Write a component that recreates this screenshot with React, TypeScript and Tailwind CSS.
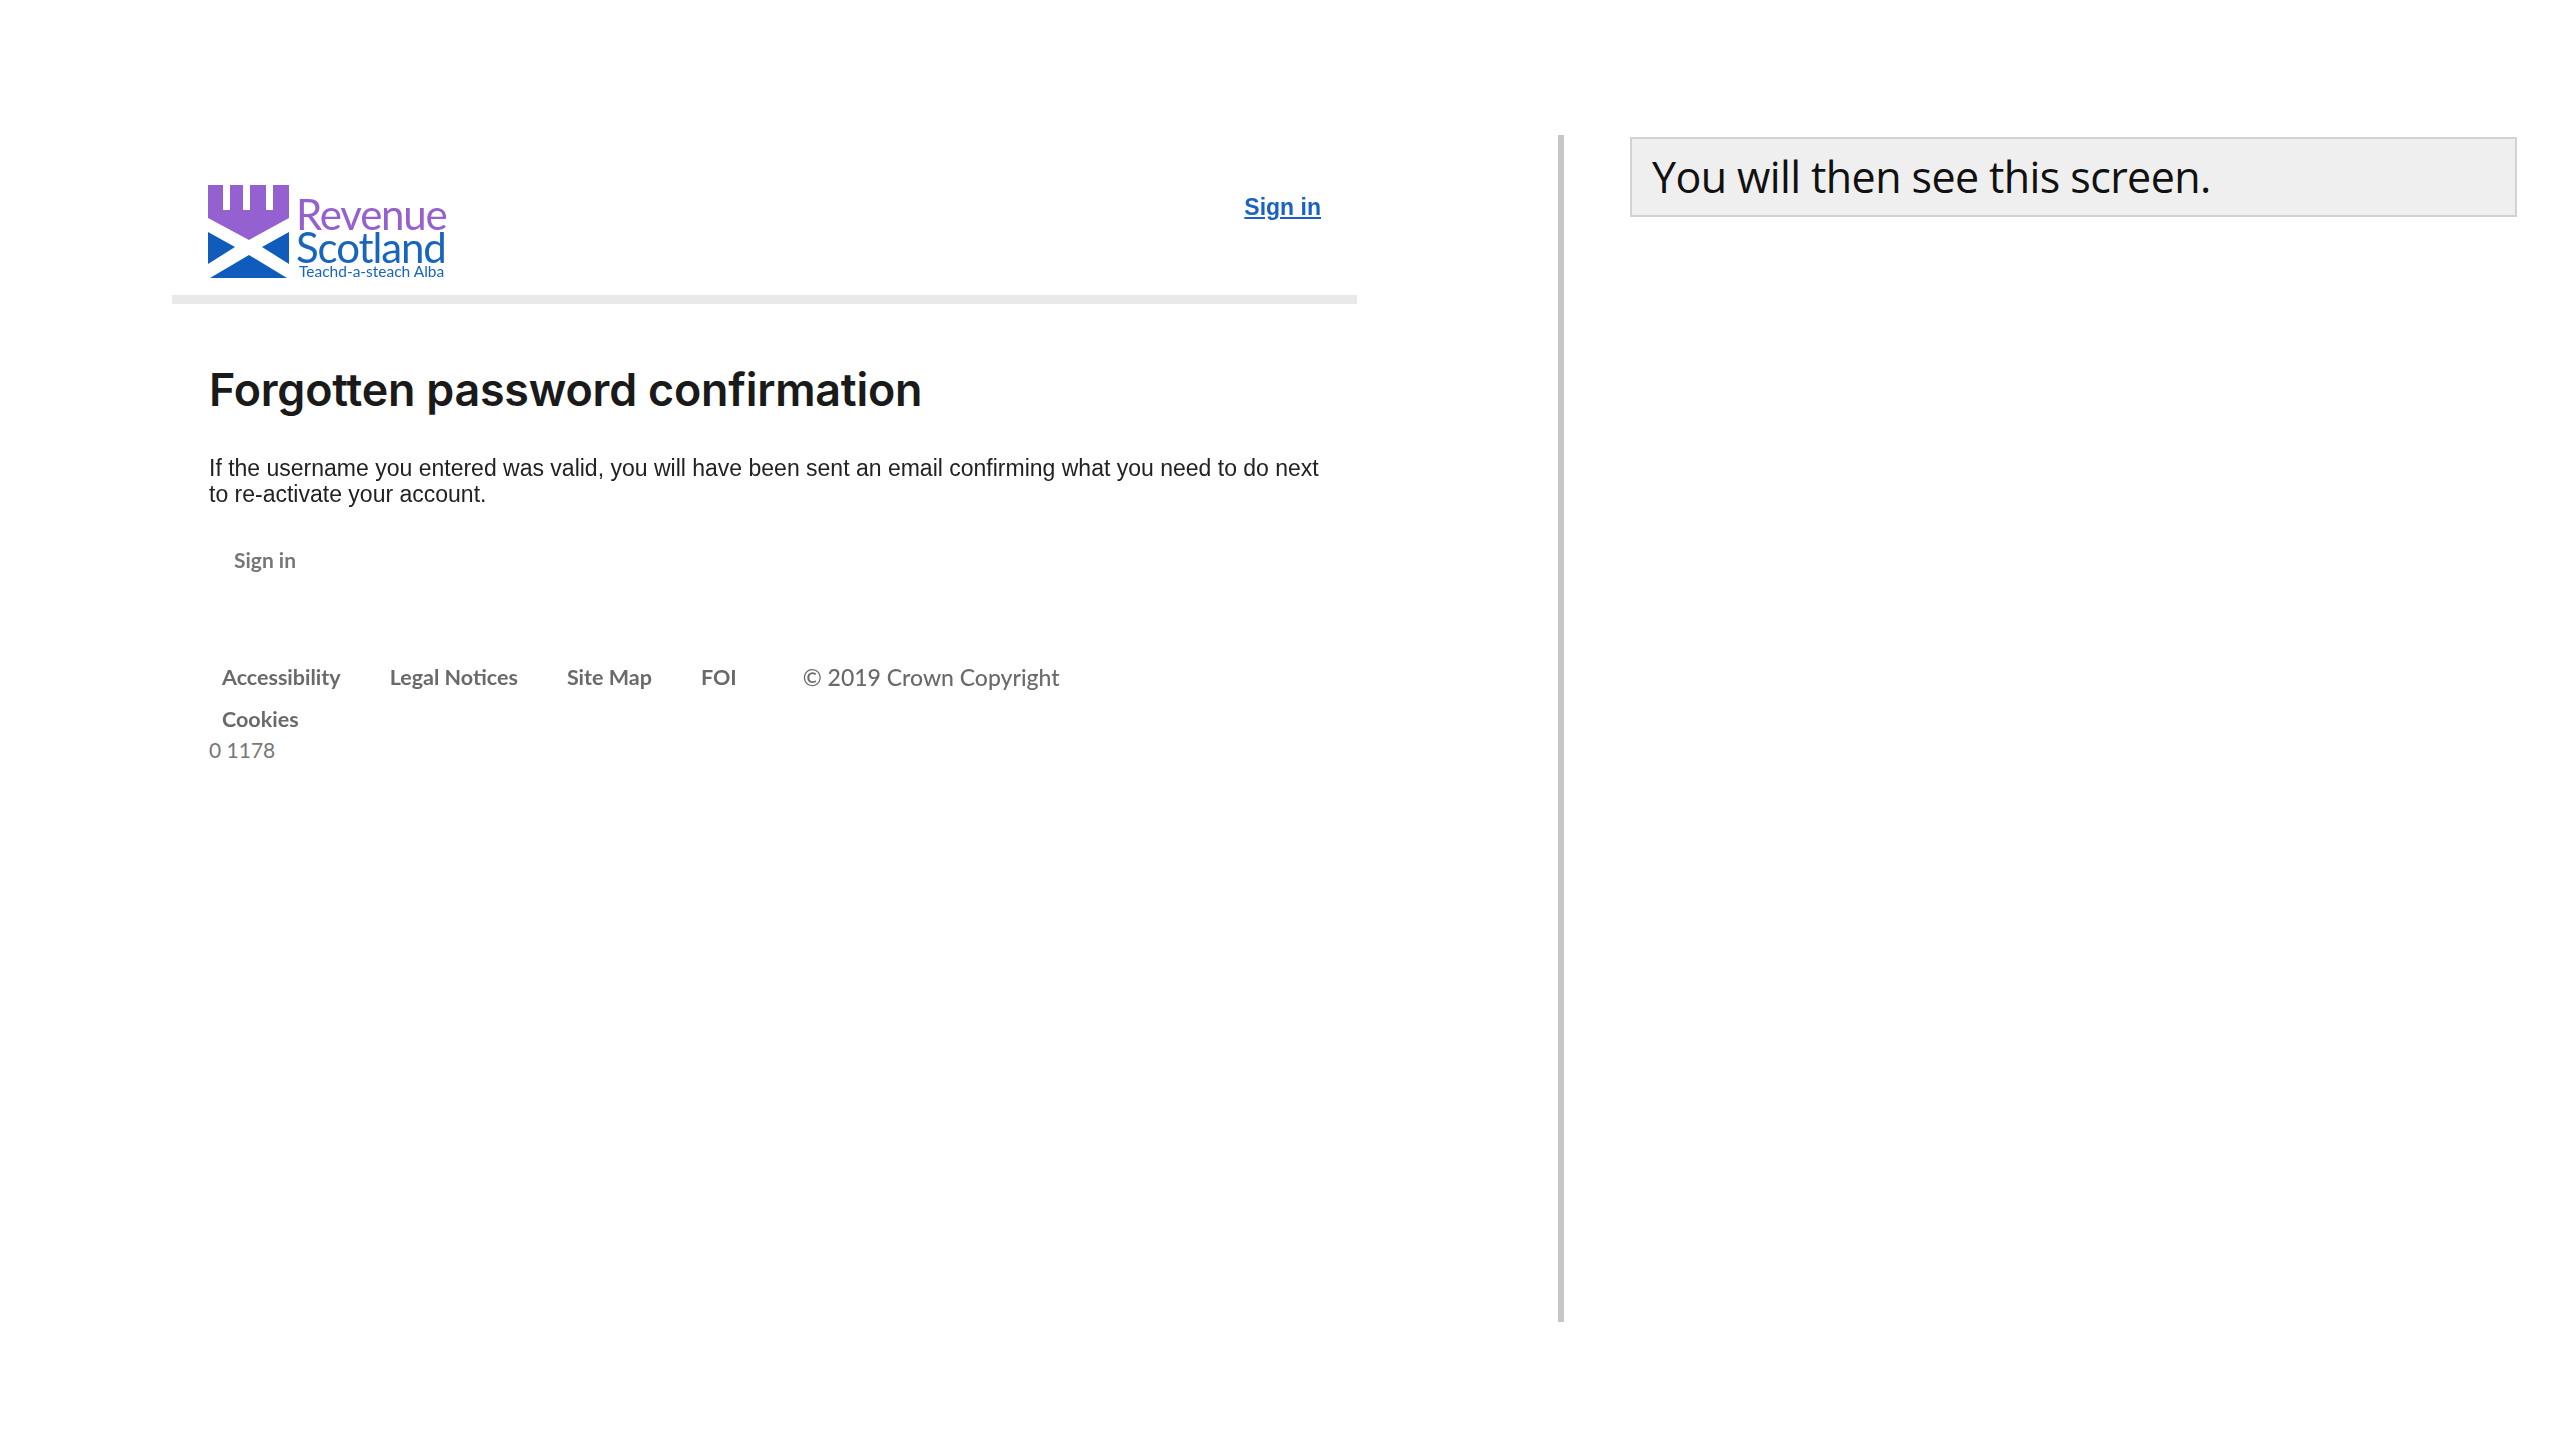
import React from 'react';

const RevenueLogo: React.FC = () => (
  <div className="flex items-start blur-[0.6px]">
    <svg width="82" height="94" viewBox="0 0 82 94" className="shrink-0">
      {/* castle */}
      <path d="M0 0H15V25H22V0H35V25H42V0H58V25H65V0H81V33L41 55L0 33Z" fill="#9560cf" />
      {/* saltire */}
      <path d="M0 47L27 62L0 79Z" fill="#0f5cbd" />
      <path d="M81 47V79L54 62Z" fill="#0f5cbd" />
      <path d="M2 93L41 70L79 93Z" fill="#0f5cbd" />
    </svg>
    <div className="ml-[6px] flex flex-col font-['Lato',sans-serif] whitespace-nowrap">
      <span className="text-[42px] leading-[33px] mt-[13px] tracking-[-1.2px] text-[#9560cf]">Revenue</span>
      <span className="text-[42px] leading-[33px] tracking-[-1.1px] text-[#1765bd]">Scotland</span>
      <span className="ml-[3px] text-[15.5px] leading-[14px] text-[#1765bd]">Teachd-a-steach Alba</span>
    </div>
  </div>
);

export default function App() {
  return (
    <div className="w-[2560px] h-[1440px] bg-white flex overflow-hidden">
      {/* captured page */}
      <div className="w-[1558px] shrink-0 pt-[185px] pl-[172px]">
        <header className="w-[1185px] h-[119px] pl-[36px] pr-[36px] border-b-[9px] border-[#e9e9e9] flex justify-between items-start">
          <RevenueLogo />
          <a className="mt-[7px] font-['Liberation_Sans',sans-serif] font-bold text-[23px] leading-[30px] text-[#1a62c0] underline underline-offset-2 blur-[0.4px]">
            Sign in
          </a>
        </header>
        <main className="pl-[37px]">
          <h1 className="mt-[56px] font-['Inter',sans-serif] font-semibold text-[44.8px] leading-[60px] text-[#1a1a1a] tracking-[-0.2px] whitespace-nowrap">
            Forgotten password confirmation
          </h1>
          <p className="mt-[35px] w-[1125px] font-['Liberation_Sans',sans-serif] text-[23px] leading-[26px] text-[#222222] blur-[0.3px]">
            If the username you entered was valid, you will have been sent an email confirming what you need to do next to re-activate your account.
          </p>
          <div className="mt-[40px] ml-[25px] font-['Lato',sans-serif] font-bold text-[21px] leading-[26px] text-[#777777] blur-[0.3px]">
            Sign in
          </div>
          <footer className="mt-[90px] ml-[13px] font-['Lato',sans-serif] font-bold text-[21.5px] text-[#6a6a6a] blur-[0.3px]">
            <div className="flex items-center h-[28px] whitespace-nowrap">
              <span>Accessibility</span>
              <span className="ml-[49px]">Legal Notices</span>
              <span className="ml-[49px]">Site Map</span>
              <span className="ml-[49px]">FOI</span>
              <span className="ml-[66px] text-[23px] font-medium">© 2019 Crown Copyright</span>
            </div>
            <div className="mt-[14px] leading-[28px]">Cookies</div>
          </footer>
          <div className="mt-[2px] font-['Lato',sans-serif] text-[21px] leading-[30px] text-[#777777]">0 1178</div>
        </main>
      </div>

      {/* divider */}
      <div className="mt-[135px] w-[6px] h-[1187px] bg-[#c6c6c6] shrink-0" />

      {/* note */}
      <div className="ml-[66px] mt-[137px] w-[887px] h-[80px] shrink-0 bg-[#efefef] border-2 border-[#d2d2d2] flex items-center pl-[20px]">
        <span className="font-['Open_Sans',sans-serif] text-[43px] leading-[50px] text-[#111111] tracking-[-0.6px]">
          You will then see this screen.
        </span>
      </div>
    </div>
  );
}
